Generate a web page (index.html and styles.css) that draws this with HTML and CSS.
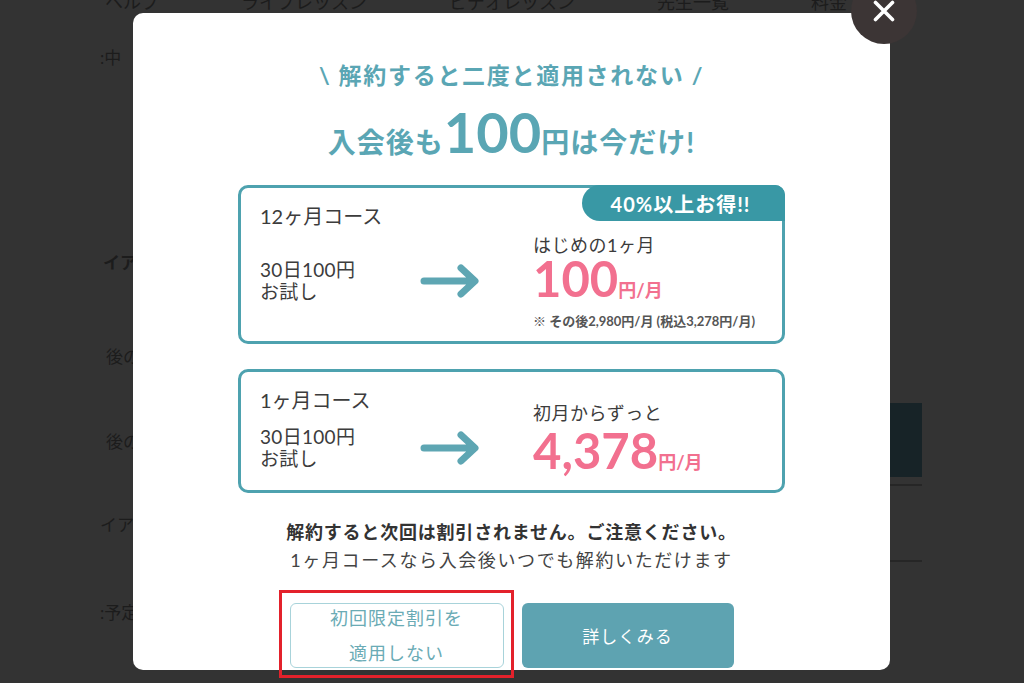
FILE: index.html
```html
<!DOCTYPE html>
<html lang="ja">
<head>
<meta charset="utf-8">
<title>初回限定割引</title>
<link rel="stylesheet" href="styles.css">
</head>
<body>
<div class="page">
  <nav class="nav">
    <span>ヘルプ</span><span>ライブレッスン</span><span>ビデオレッスン</span><span>先生一覧</span><span>料金</span>
  </nav>
  <div class="bg-main">
    <ul class="bg-list">
      <li class="bg-item bg-item--1">:中</li>
      <li class="bg-item bg-item--2 bg-item--bold">イア</li>
      <li class="bg-item bg-item--3 bg-item--in">後の</li>
      <li class="bg-item bg-item--4 bg-item--in">後の</li>
      <li class="bg-item bg-item--5">イア</li>
      <li class="bg-item bg-item--6">:予定</li>
    </ul>
    <div class="bg-side">
      <div class="bg-box"></div>
      <div class="bg-line"></div>
      <div class="bg-line bg-line--2"></div>
    </div>
  </div>
</div>

<div class="modal">
  <button class="close" aria-label="閉じる">
    <svg width="24" height="24" viewBox="0 0 24 24"><path d="M3.5 3.5 L20.5 20.5 M20.5 3.5 L3.5 20.5" stroke="#fff" stroke-width="3.6" stroke-linecap="round" fill="none"/></svg>
  </button>

  <p class="lead">\ 解約すると二度と適用されない /</p>
  <p class="headline">入会後も<span class="headline-num">100</span>円は今だけ!</p>

  <section class="plan plan--yearly">
    <div class="badge">40%以上お得!!</div>
    <h2 class="plan-title">12ヶ月コース</h2>
    <p class="plan-trial">30日100円<br>お試し</p>
    <svg class="plan-arrow" viewBox="0 0 60 34"><path d="M4 17 H54 M41 4 L55 17 L41 30" stroke="#5ea6b3" stroke-width="7" stroke-linecap="round" stroke-linejoin="round" fill="none"/></svg>
    <div class="plan-offer">
      <p class="offer-label">はじめの1ヶ月</p>
      <p class="offer-price"><span class="price-num">100</span><span class="price-unit">円/月</span></p>
      <p class="offer-note">※ その後2,980円/月 (税込3,278円/月)</p>
    </div>
  </section>

  <section class="plan plan--monthly">
    <h2 class="plan-title">1ヶ月コース</h2>
    <p class="plan-trial">30日100円<br>お試し</p>
    <svg class="plan-arrow" viewBox="0 0 60 34"><path d="M4 17 H54 M41 4 L55 17 L41 30" stroke="#5ea6b3" stroke-width="7" stroke-linecap="round" stroke-linejoin="round" fill="none"/></svg>
    <div class="plan-offer">
      <p class="offer-label">初月からずっと</p>
      <p class="offer-price"><span class="price-num">4,378</span><span class="price-unit">円/月</span></p>
    </div>
  </section>

  <div class="notice">
    <p class="notice-strong">解約すると次回は割引されません。ご注意ください。</p>
    <p class="notice-sub">1ヶ月コースなら入会後いつでも解約いただけます</p>
  </div>

  <div class="actions">
    <div class="highlight"></div>
    <a class="btn btn-skip">初回限定割引を<br>適用しない</a>
    <a class="btn btn-more">詳しくみる</a>
  </div>
</div>
</body>
</html>
```

FILE: styles.css
```css
html, body {
  margin: 0;
  padding: 0;
}

body {
  width: 1024px;
  height: 683px;
  overflow: hidden;
  background: #333333;
  font-family: "Lato", "Noto Sans CJK JP", sans-serif;
  position: relative;
}

p, h2, ul {
  margin: 0;
  padding: 0;
}

/* background page (dimmed) */
.page {
  padding: 0 102px 0 100px;
  color: #1c1c1c;
}

.nav {
  display: flex;
  gap: 82px;
  padding-left: 5px;
  margin-top: -8px;
  font-size: 18px;
  line-height: 20px;
  height: 20px;
}

.bg-main {
  display: flex;
  justify-content: space-between;
}

.bg-list {
  list-style: none;
  font-size: 17px;
  line-height: 20px;
}

.bg-item--1 { margin-top: 36px; }
.bg-item--2 { margin-top: 185px; padding-left: 3px; }
.bg-item--3 { margin-top: 74px; }
.bg-item--4 { margin-top: 65px; }
.bg-item--5 { margin-top: 63px; }
.bg-item--6 { margin-top: 68px; }
.bg-item--bold { font-weight: 700; }
.bg-item--in { padding-left: 6px; }

.bg-side {
  width: 62px;
  padding-top: 391px;
}

.bg-box {
  height: 74px;
  background: #172327;
}

.bg-line {
  margin-top: 7px;
  height: 2px;
  background: #262626;
}

.bg-line--2 {
  margin-top: 74px;
}

/* modal */
.modal {
  position: absolute;
  left: 133px;
  top: 13px;
  width: 757px;
  height: 657px;
  box-sizing: border-box;
  padding-top: 47px;
  background: #ffffff;
  border-radius: 10px;
  display: flex;
  flex-direction: column;
  align-items: center;
  color: #3c3c3c;
}

.close {
  position: absolute;
  left: 718px;
  top: -35px;
  width: 66px;
  height: 66px;
  border: none;
  border-radius: 50%;
  background: #3c3535;
  padding: 0;
  display: flex;
  align-items: center;
  justify-content: center;
}

.lead {
  font-size: 23px;
  line-height: 30px;
  font-weight: 700;
  color: #5aa6b4;
  letter-spacing: 1.7px;
}

.headline {
  margin-top: 12px;
  height: 60px;
  font-size: 28px;
  line-height: 60px;
  font-weight: 700;
  color: #5aa6b4;
  letter-spacing: 1px;
}

.headline-num {
  font-size: 56px;
  letter-spacing: 0;
}

.plan {
  position: relative;
  margin-top: 23px;
  width: 547px;
  height: 159px;
  box-sizing: border-box;
  padding: 15px 0 8px 19px;
  border: 3px solid #4ea2af;
  border-radius: 10px;
  display: grid;
  grid-template-columns: 160px 113px 1fr;
  grid-template-rows: 26px 1fr;
}

.plan--monthly {
  margin-top: 25px;
  height: 124px;
}

.badge {
  position: absolute;
  top: -3px;
  right: -3px;
  width: 203px;
  height: 36px;
  box-sizing: border-box;
  padding-right: 6px;
  background: #3998a5;
  border-radius: 18px 10px 0 18px;
  color: #ffffff;
  font-size: 20px;
  font-weight: 700;
  letter-spacing: 1px;
  display: flex;
  align-items: center;
  justify-content: center;
}

.plan-title {
  grid-column: 1 / 3;
  grid-row: 1;
  font-size: 20px;
  line-height: 26px;
  font-weight: 400;
  color: #3c3c3c;
}

.plan-trial {
  grid-column: 1;
  grid-row: 2;
  align-self: center;
  font-size: 19px;
  line-height: 22px;
  letter-spacing: 0.3px;
}

.plan-arrow {
  grid-column: 2;
  grid-row: 2;
  align-self: center;
  width: 60px;
  height: 34px;
}

.plan-offer {
  grid-column: 3;
  grid-row: 2;
  align-self: center;
}

.plan--monthly .plan-offer {
  grid-row: 1 / 3;
  align-self: start;
  margin-top: 14px;
}

.offer-label {
  font-size: 18px;
  line-height: 24px;
  letter-spacing: 0.5px;
}

.offer-price {
  margin-top: -1px;
  height: 44px;
  line-height: 44px;
  color: #f2708f;
  font-weight: 700;
}

.plan--monthly .offer-price {
  margin-top: 3px;
}

.price-num {
  font-size: 49px;
}

.price-unit {
  font-size: 18px;
}

.offer-note {
  margin-top: 12px;
  font-size: 13px;
  line-height: 18px;
  font-weight: 700;
  color: #555555;
}

.notice {
  margin-top: 25px;
  text-align: center;
  font-size: 18px;
  line-height: 28px;
}

.notice-strong {
  font-weight: 700;
  color: #333333;
  letter-spacing: 0.8px;
}

.notice-sub {
  color: #444444;
  letter-spacing: 1.6px;
}

.actions {
  position: relative;
  margin-top: 29px;
  display: flex;
  gap: 18px;
}

.btn {
  height: 65px;
  box-sizing: border-box;
  border-radius: 6px;
  display: flex;
  align-items: center;
  justify-content: center;
  text-align: center;
  letter-spacing: 1px;
}

.btn-skip {
  width: 214px;
  border: 1.5px solid #a8d3da;
  color: #6aabb5;
  font-size: 18px;
  line-height: 35px;
}

.btn-more {
  width: 212px;
  background: #5ea3b1;
  color: #ffffff;
  font-size: 17px;
}

.highlight {
  position: absolute;
  left: -11px;
  top: -13px;
  width: 235px;
  height: 88px;
  box-sizing: border-box;
  border: 3.5px solid #e3212b;
}
```
